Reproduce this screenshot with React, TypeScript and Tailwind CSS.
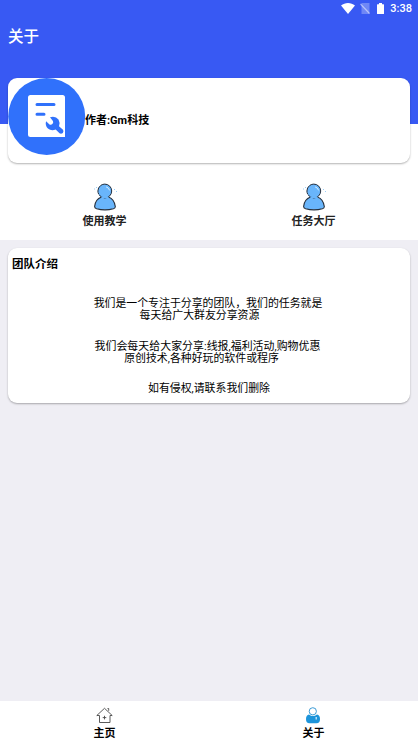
import type { ReactNode } from 'react';

interface TileProps {
  label: string;
  icon: ReactNode;
}

// trailing padding keeps the wrapped lines slightly left of centre
const paragraphs = [
  [
    { text: '我们是一个专注于分享的团队，我们的任务就是', pad: 'pr-[2px]' },
    { text: '每天给广大群友分享资源', pad: 'pr-[19px]' },
  ],
  [
    { text: '我们会每天给大家分享:线报,福利活动,购物优惠', pad: 'pr-[3px] tracking-[0.05px]' },
    { text: '原创技术,各种好玩的软件或程序', pad: 'pr-[15px]' },
  ],
  [{ text: '如有侵权,请联系我们删除', pad: 'pr-0' }],
];

function StatusIcons() {
  return (
    <div className="flex h-[18px] items-center justify-end pr-[6px] text-white">
      <svg className="-mt-px" width="14" height="11" viewBox="0 0 14 11" fill="currentColor">
        <path d="M0 2.6C4-.8 10-.8 14 2.6L7 11z" />
      </svg>
      <svg className="ml-[5px] -mt-px" width="10" height="11" viewBox="0 0 10 11">
        <path d="M1.5 0H9.5v11H1.5z" fill="#fff" opacity=".28" />
        <path d="M.5 1l9 9.500" stroke="#fff" strokeWidth="1.1" opacity=".5" />
      </svg>
      <svg className="ml-[7px] -mt-[2px]" width="7" height="11" viewBox="0 0 7 11" fill="currentColor">
        <path d="M2 0h3v1.2h1.5q.5 0 .5.5v8.8q0 .5-.5.5h-6q-.5 0-.5-.5V1.7q0-.5.5-.5H2z" />
      </svg>
      <span className="ml-[6px] font-[Roboto] text-[11px] font-medium leading-[18px]">3:38</span>
    </div>
  );
}

function Logo() {
  return (
    <svg className="shrink-0" width="78" height="78" viewBox="0 0 78 78">
      <circle cx="38.7" cy="38.5" r="38.5" fill="#3071fb" />
      <path d="M22.500 17h32q2.500 0 2.500 2.500V59H22.500Q20 59 20 56.500v-37Q20 17 22.500 17z" fill="#fff" />
      <path d="M29 26.500h17M29 36.200h7" stroke="#3071fb" strokeWidth="3" strokeLinecap="round" />
      <path
        d="M42 39.200Q47.500 37.600 50.500 41.500Q52.300 44.500 51 48.200L55 51.800Q56 53.400 54.800 54.900Q53.200 56.300 51.500 55.200L47.700 51.500Q43.300 53.400 39.900 50.500Q36.800 47.300 38.100 43.200L41.500 46.400Q43 47.300 44.400 46Q45.800 44.500 44.900 43z"
        fill="#3071fb"
      />
    </svg>
  );
}

function PersonIcon() {
  return (
    <svg width="26" height="28" viewBox="0 0 26 28" fill="#69b5fb" stroke="#252f3c" strokeLinecap="round">
      <path d="M9.5 14C5.2 15.6 3 19.5 2.6 23.5q0 1.6 2 2.2q8.4 2.3 16.8 0q2-.6 1.900-2.200C22.700 19 20.500 15.500 16.500 14z" strokeWidth="1.1" />
      <circle cx="12.8" cy="8" r="6.900" strokeWidth="1" strokeDasharray="17 1.5 9 1" />
      <path d="M10 14.300h6" stroke="#69b5fb" strokeWidth="1.500" />
      <path d="M14.5 4q2.5.8 3 3" stroke="#d7efff" fill="none" />
      <path d="M2.5 6h.1M4.5 4.5h.1M22.5 6.5h.1M24.5 8.5h.1" stroke="#91c8f5" fill="none" />
    </svg>
  );
}

function HomeIcon() {
  return (
    <svg width="18" height="17" viewBox="0 0 18 17" fill="none" stroke="#4a4a4a" strokeWidth=".9">
      <path d="M3.5 8.5v7h10.500v-7M3.500 8.500H.8L8.500 1.300l7.700 7.200H14" strokeLinejoin="round" />
      <path d="M11.5 1.5h1.2v2.3M8.5 8.8v3.6M6.700 10.600h3.600" />
    </svg>
  );
}

function AboutIcon() {
  return (
    <svg className="-ml-px" width="16" height="17" viewBox="0 0 16 17">
      <path d="M4 7.500Q8 10.500 12 7.500Q15 8 15 12Q15 16.300 11.500 16.300h-7Q1 16.300 1 12Q1 8 4 7.500z" fill="#1c94da" />
      <circle cx="7.8" cy="4.3" r="3.6" fill="#fff" stroke="#3d9cd6" strokeWidth="1" />
      <path d="M11.200 10v2.500" stroke="#d8efff" strokeWidth="1.200" />
    </svg>
  );
}

function Shortcut({ label, icon }: TileProps) {
  return (
    <div className="flex flex-1 flex-col items-center">
      {icon}
      <span className="mt-[3px] text-[11px] font-bold leading-[16px] text-[#222]">{label}</span>
    </div>
  );
}

function Tab({ label, icon }: TileProps) {
  return (
    <div className="flex flex-1 flex-col items-center pt-[6px]">
      {icon}
      <span className="mt-[2px] text-[11px] font-bold leading-[16px]">{label}</span>
    </div>
  );
}

export default function App() {
  return (
    <div className="flex h-[744px] w-[418px] flex-col overflow-hidden bg-[#efeef4] font-[Roboto,'Noto_Sans_CJK_SC',sans-serif] text-black">
      <header className="h-[124px] shrink-0 bg-[#3859f3]">
        <StatusIcons />
        <h1 className="ml-[8px] mt-[8px] text-[15.5px] font-medium leading-[22px] text-white">关于</h1>
      </header>

      <section className="h-[116px] shrink-0 bg-white px-[8px]">
        <div className="relative -mt-[46px] flex h-[85px] rounded-[9px] bg-white shadow-[0_1px_2px_rgba(0,0,0,0.3)]">
          <Logo />
          <span className="mt-[35px] -ml-px text-[11px] font-bold leading-[16px]">作者:Gm科技</span>
        </div>
        <div className="-mx-[8px] mt-[20px] flex">
          <Shortcut label="使用教学" icon={<PersonIcon />} />
          <Shortcut label="任务大厅" icon={<PersonIcon />} />
        </div>
      </section>

      <section className="mx-[8px] mt-[8px] h-[155px] rounded-[9px] bg-white shadow-[0_1px_2px_rgba(0,0,0,0.3)]">
        <h2 className="ml-[4px] pt-[8px] text-[11.5px] font-bold leading-[16px]">团队介绍</h2>
        <div className="mt-[26px] flex flex-col gap-[18px] text-center text-[10.9px] leading-[12.3px]">
          {paragraphs.map(lines => (
            <div key={lines[0].text}>
              {lines.map(line => (
                <p key={line.text} className={`whitespace-nowrap ${line.pad}`}>{line.text}</p>
              ))}
            </div>
          ))}
        </div>
      </section>

      <nav className="mt-auto flex h-[43px] shrink-0 bg-white">
        <Tab label="主页" icon={<HomeIcon />} />
        <Tab label="关于" icon={<AboutIcon />} />
      </nav>
    </div>
  );
}
